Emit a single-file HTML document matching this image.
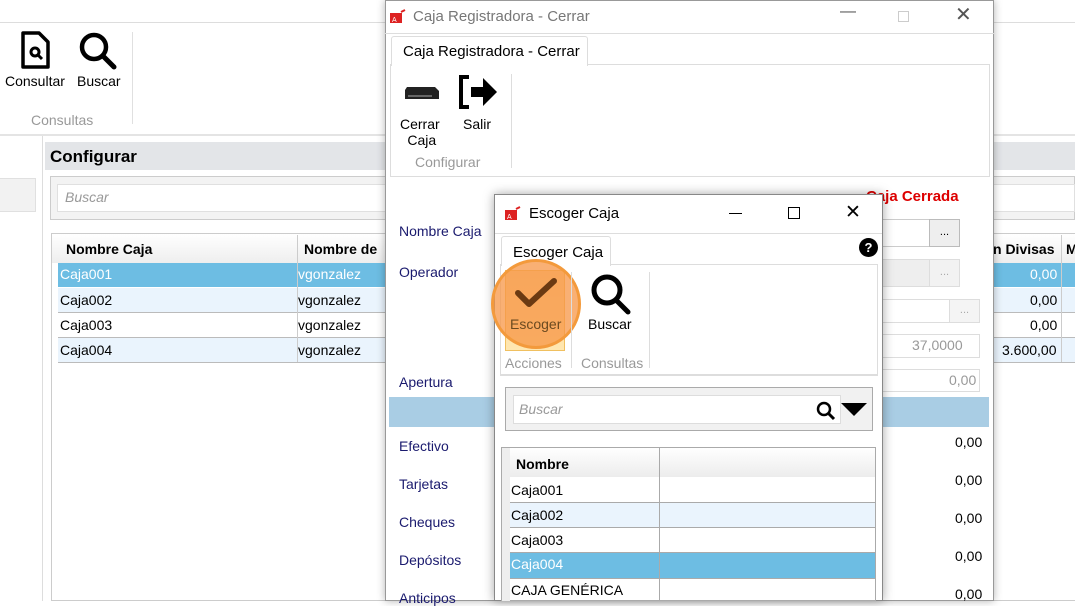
<!DOCTYPE html>
<html><head><meta charset="utf-8"><style>
*{box-sizing:border-box;margin:0;padding:0}
body{width:1075px;height:601px;overflow:hidden;background:#fff;font-family:"Liberation Sans",sans-serif;font-size:14px;color:#000;position:relative}
.a{position:absolute}
.t{position:absolute;white-space:nowrap}
.g{color:#999}
.nv{color:#1a1a6e}
</style></head><body>
<!-- background window -->
<div class="a" style="left:0;top:22px;width:1075px;height:1px;background:#ddd"></div>
<div class="a" style="left:0;top:134px;width:1075px;height:2px;background:#e4e4e4"></div>
<svg class="a" style="left:20px;top:30px" width="32" height="40" viewBox="0 0 32 40"><path d="M3 3h16l9 9v25H3z" fill="none" stroke="#000" stroke-width="3.5" stroke-linejoin="round"/><circle cx="15" cy="22" r="4" fill="none" stroke="#000" stroke-width="3"/><path d="M18 25l4 4" stroke="#000" stroke-width="3"/></svg>
<svg class="a" style="left:78px;top:31px" width="40" height="40" viewBox="0 0 40 40"><circle cx="16" cy="16" r="12" fill="none" stroke="#000" stroke-width="4.5"/><path d="M25 25l11 11" stroke="#000" stroke-width="5" stroke-linecap="round"/></svg>
<div class="t" style="left:5px;top:73px">Consultar</div>
<div class="t" style="left:77px;top:73px">Buscar</div>
<div class="t g" style="left:31px;top:112px">Consultas</div>
<div class="a" style="left:132px;top:32px;width:1px;height:92px;background:#e0e0e0"></div>
<div class="a" style="left:0;top:178px;width:36px;height:34px;background:#f2f2f2;border:1px solid #e0e0e0;border-left:none"></div>
<div class="a" style="left:42px;top:136px;width:1px;height:465px;background:#ddd"></div>
<div class="a" style="left:45px;top:142px;width:1030px;height:28px;background:#e3e5e8"></div>
<div class="t" style="left:50px;top:147px;font-weight:bold;font-size:17px">Configurar</div>
<div class="a" style="left:50px;top:176px;width:1025px;height:44px;background:#f3f3f3;border:1px solid #ccc"></div>
<div class="a" style="left:57px;top:184px;width:1018px;height:28px;background:#fff;border:1px solid #e0e0e0"></div>
<div class="t g" style="left:65px;top:189px;font-style:italic">Buscar</div>
<div class="a" style="left:51px;top:233px;width:1024px;height:368px;border:1px solid #ccc;border-right:none"></div>
<div class="a" style="left:52px;top:234px;width:1023px;height:29px;background:linear-gradient(#fff,#eee)"></div>
<div class="t" style="left:66px;top:241px;font-weight:bold">Nombre Caja</div>
<div class="t" style="left:304px;top:241px;font-weight:bold">Nombre de</div>
<div class="t" style="left:993px;top:241px;font-weight:bold">n Divisas</div>
<div class="t" style="left:1066px;top:241px;font-weight:bold">M</div>
<div class="a" style="left:58px;top:263px;width:1017px;height:24px;background:#6dbde3"></div>
<div class="a" style="left:58px;top:288px;width:1017px;height:24px;background:#eaf4fd"></div>
<div class="a" style="left:58px;top:338px;width:1017px;height:24px;background:#eaf4fd"></div>
<div class="a" style="left:58px;top:312px;width:1017px;height:1px;background:#bbb"></div>
<div class="a" style="left:58px;top:337px;width:1017px;height:1px;background:#bbb"></div>
<div class="a" style="left:58px;top:362px;width:1017px;height:1px;background:#bbb"></div>
<div class="a" style="left:297px;top:235px;width:1px;height:127px;background:#ccc"></div>
<div class="a" style="left:1061px;top:235px;width:1px;height:127px;background:#ccc"></div>
<div class="t" style="left:60px;top:266px;color:#fff">Caja001</div><div class="t" style="left:298px;top:266px;color:#fff">vgonzalez</div><div class="t" style="left:1030px;top:266px;color:#fff">0,00</div>
<div class="t" style="left:60px;top:292px">Caja002</div><div class="t" style="left:298px;top:292px">vgonzalez</div><div class="t" style="left:1030px;top:292px">0,00</div>
<div class="t" style="left:60px;top:317px">Caja003</div><div class="t" style="left:298px;top:317px">vgonzalez</div><div class="t" style="left:1030px;top:317px">0,00</div>
<div class="t" style="left:60px;top:342px">Caja004</div><div class="t" style="left:298px;top:342px">vgonzalez</div><div class="t" style="left:1002px;top:342px">3.600,00</div>

<!-- dialog 1 -->
<div class="a" style="left:385px;top:0;width:609px;height:601px;background:#fff;border:1px solid #999;box-shadow:0 0 8px rgba(0,0,0,.3)"></div>
<svg class="a" style="left:390px;top:9px" width="18" height="14"><rect x="0" y="4" width="12" height="10" fill="#d22"/><text x="2" y="13" font-size="7" fill="#fff" font-family="Liberation Sans">A</text><path d="M11 3l4-2" stroke="#d22" stroke-width="2"/></svg>
<div class="t" style="left:413px;top:8px;color:#777;font-size:15px">Caja Registradora - Cerrar</div>
<div class="t" style="left:840px;top:3px;color:#555;font-size:16px">—</div>
<div class="a" style="left:898px;top:11px;width:11px;height:11px;border:1px solid #ccc"></div>
<div class="t" style="left:955px;top:2px;color:#555;font-size:20px">✕</div>
<div class="a" style="left:385px;top:33px;width:609px;height:1px;background:#ddd"></div>
<div class="a" style="left:390px;top:64px;width:600px;height:113px;border:1px solid #ddd"></div>
<div class="a" style="left:391px;top:36px;width:197px;height:30px;background:#fff;border:1px solid #ddd;border-bottom:none;border-radius:3px 3px 0 0"></div>
<div class="t" style="left:403px;top:43px;font-size:15px">Caja Registradora - Cerrar</div>
<svg class="a" style="left:404px;top:82px" width="36" height="22"><path d="M3 5h28l4 4v8H1V8z" fill="#222"/><rect x="4" y="13" width="24" height="2" fill="#666"/></svg>
<svg class="a" style="left:457px;top:74px" width="42" height="36"><path d="M12 3H4v30h8" fill="none" stroke="#000" stroke-width="4"/><path d="M14 13h12V4l14 14-14 14v-9H14z" fill="#000"/></svg>
<div class="t" style="left:400px;top:116px;text-align:center;line-height:16px">Cerrar<br>&nbsp;Caja</div>
<div class="t" style="left:463px;top:116px">Salir</div>
<div class="t g" style="left:415px;top:154px">Configurar</div>
<div class="a" style="left:511px;top:74px;width:1px;height:94px;background:#ddd"></div>
<div class="t" style="left:866px;top:188px;color:#d00;font-weight:bold;font-size:15px">Caja Cerrada</div>
<div class="t nv" style="left:399px;top:223px">Nombre Caja</div>
<div class="t nv" style="left:399px;top:264px">Operador</div>
<div class="t nv" style="left:399px;top:374px">Apertura</div>
<div class="a" style="left:880px;top:219px;width:50px;height:28px;border:1px solid #ccc;background:#fff"></div>
<div class="a" style="left:929px;top:219px;width:31px;height:28px;border:1px solid #bbb;background:#eee;text-align:center;font-size:11px;line-height:24px">...</div>
<div class="a" style="left:880px;top:259px;width:50px;height:28px;border:1px solid #ddd;background:#eee"></div>
<div class="a" style="left:929px;top:259px;width:31px;height:28px;border:1px solid #ddd;background:#f2f2f2;text-align:center;font-size:11px;line-height:24px;color:#aaa">...</div>
<div class="a" style="left:880px;top:299px;width:70px;height:24px;border:1px solid #ddd"></div>
<div class="a" style="left:949px;top:299px;width:31px;height:24px;border:1px solid #ddd;background:#f4f4f4;text-align:center;font-size:11px;line-height:20px;color:#aaa">...</div>
<div class="a" style="left:880px;top:334px;width:100px;height:24px;border:1px solid #ddd"></div>
<div class="t g" style="left:912px;top:337px">37,0000</div>
<div class="a" style="left:880px;top:369px;width:100px;height:23px;border:1px solid #ddd"></div>
<div class="t g" style="left:949px;top:372px">0,00</div>
<div class="a" style="left:389px;top:397px;width:600px;height:30px;background:#a9cde4"></div>
<div class="t nv" style="left:399px;top:438px">Efectivo</div>
<div class="t nv" style="left:399px;top:476px">Tarjetas</div>
<div class="t nv" style="left:399px;top:514px">Cheques</div>
<div class="t nv" style="left:399px;top:552px">Depósitos</div>
<div class="t nv" style="left:399px;top:590px">Anticipos</div>
<div class="t" style="left:955px;top:434px">0,00</div>
<div class="t" style="left:955px;top:472px">0,00</div>
<div class="t" style="left:955px;top:510px">0,00</div>
<div class="t" style="left:955px;top:548px">0,00</div>
<div class="t" style="left:955px;top:586px">0,00</div>

<!-- dialog 2 -->
<div class="a" style="left:494px;top:194px;width:389px;height:407px;background:#fff;border:1px solid #888;box-shadow:0 0 10px rgba(0,0,0,.35)"></div>
<svg class="a" style="left:505px;top:206px" width="18" height="14"><rect x="0" y="4" width="12" height="10" fill="#d22"/><text x="2" y="13" font-size="7" fill="#fff" font-family="Liberation Sans">A</text><path d="M11 3l4-2" stroke="#d22" stroke-width="2"/></svg>
<div class="t" style="left:529px;top:205px;font-size:15px">Escoger Caja</div>
<div class="a" style="left:729px;top:213px;width:13px;height:1px;background:#000"></div>
<div class="a" style="left:788px;top:207px;width:12px;height:12px;border:1px solid #000"></div>
<div class="t" style="left:845px;top:201px;font-size:19px">✕</div>
<div class="a" style="left:495px;top:233px;width:387px;height:1px;background:#ddd"></div>
<div class="a" style="left:500px;top:264px;width:378px;height:112px;border:1px solid #ddd;border-bottom:2px solid #ddd"></div>
<div class="a" style="left:501px;top:236px;width:110px;height:30px;background:#fff;border:1px solid #ddd;border-bottom:none;border-radius:3px 3px 0 0"></div>
<div class="t" style="left:513px;top:244px;font-size:15px">Escoger Caja</div>
<div class="a" style="left:859px;top:238px;width:19px;height:19px;border-radius:50%;background:#000;color:#fff;font-weight:bold;font-size:13px;text-align:center;line-height:19px">?</div>
<div class="a" style="left:505px;top:270px;width:60px;height:81px;border:1px solid #f0c060;background:linear-gradient(#fcd79b,#ffe7b0)"></div>
<div class="a" style="left:491px;top:259px;width:90px;height:90px;border-radius:50%;background:rgba(247,150,70,.75);border:3px solid #f39a3c"></div>
<svg class="a" style="left:514px;top:277px" width="44" height="32"><path d="M4 16l11 11L40 4" fill="none" stroke="#6b3a12" stroke-width="6" stroke-linejoin="round" stroke-linecap="round"/></svg>
<div class="t" style="left:510px;top:316px;color:#6b4a20">Escoger</div>
<svg class="a" style="left:589px;top:273px" width="44" height="42"><circle cx="18" cy="17" r="13" fill="none" stroke="#000" stroke-width="5"/><path d="M27 27l12 12" stroke="#000" stroke-width="5" stroke-linecap="round"/></svg>
<div class="t" style="left:588px;top:316px">Buscar</div>
<div class="t g" style="left:505px;top:355px">Acciones</div>
<div class="t g" style="left:581px;top:355px">Consultas</div>
<div class="a" style="left:571px;top:272px;width:1px;height:96px;background:#ddd"></div>
<div class="a" style="left:649px;top:272px;width:1px;height:96px;background:#ddd"></div>
<div class="a" style="left:505px;top:387px;width:368px;height:44px;background:#f1f1f1;border:1px solid #aaa"></div>
<div class="a" style="left:513px;top:395px;width:328px;height:29px;background:#fff;border:1px solid #ddd"></div>
<div class="t g" style="left:519px;top:401px;font-style:italic">Buscar</div>
<svg class="a" style="left:815px;top:400px" width="22" height="22"><circle cx="9" cy="9" r="6" fill="none" stroke="#000" stroke-width="2.5"/><path d="M13 13l6 6" stroke="#000" stroke-width="3"/></svg>
<svg class="a" style="left:840px;top:401px" width="28" height="16"><path d="M1 2h26L14 15z" fill="#000"/></svg>
<div class="a" style="left:501px;top:447px;width:375px;height:154px;border:1px solid #aaa"></div>
<div class="a" style="left:502px;top:448px;width:373px;height:29px;background:linear-gradient(#fff,#ececec)"></div>
<div class="a" style="left:502px;top:448px;width:8px;height:153px;background:#eee"></div>
<div class="t" style="left:516px;top:456px;font-weight:bold">Nombre</div>
<div class="a" style="left:510px;top:503px;width:365px;height:25px;background:#eaf4fd"></div>
<div class="a" style="left:510px;top:553px;width:365px;height:25px;background:#6dbde3"></div>
<div class="a" style="left:510px;top:502px;width:365px;height:1px;background:#aaa"></div>
<div class="a" style="left:510px;top:527px;width:365px;height:1px;background:#aaa"></div>
<div class="a" style="left:510px;top:552px;width:365px;height:1px;background:#aaa"></div>
<div class="a" style="left:510px;top:578px;width:365px;height:1px;background:#aaa"></div>
<div class="a" style="left:659px;top:448px;width:1px;height:153px;background:#aaa"></div>
<div class="t" style="left:511px;top:482px">Caja001</div>
<div class="t" style="left:511px;top:507px">Caja002</div>
<div class="t" style="left:511px;top:532px">Caja003</div>
<div class="t" style="left:511px;top:556px;color:#fff">Caja004</div>
<div class="t" style="left:511px;top:582px">CAJA GENÉRICA</div>
</body></html>
